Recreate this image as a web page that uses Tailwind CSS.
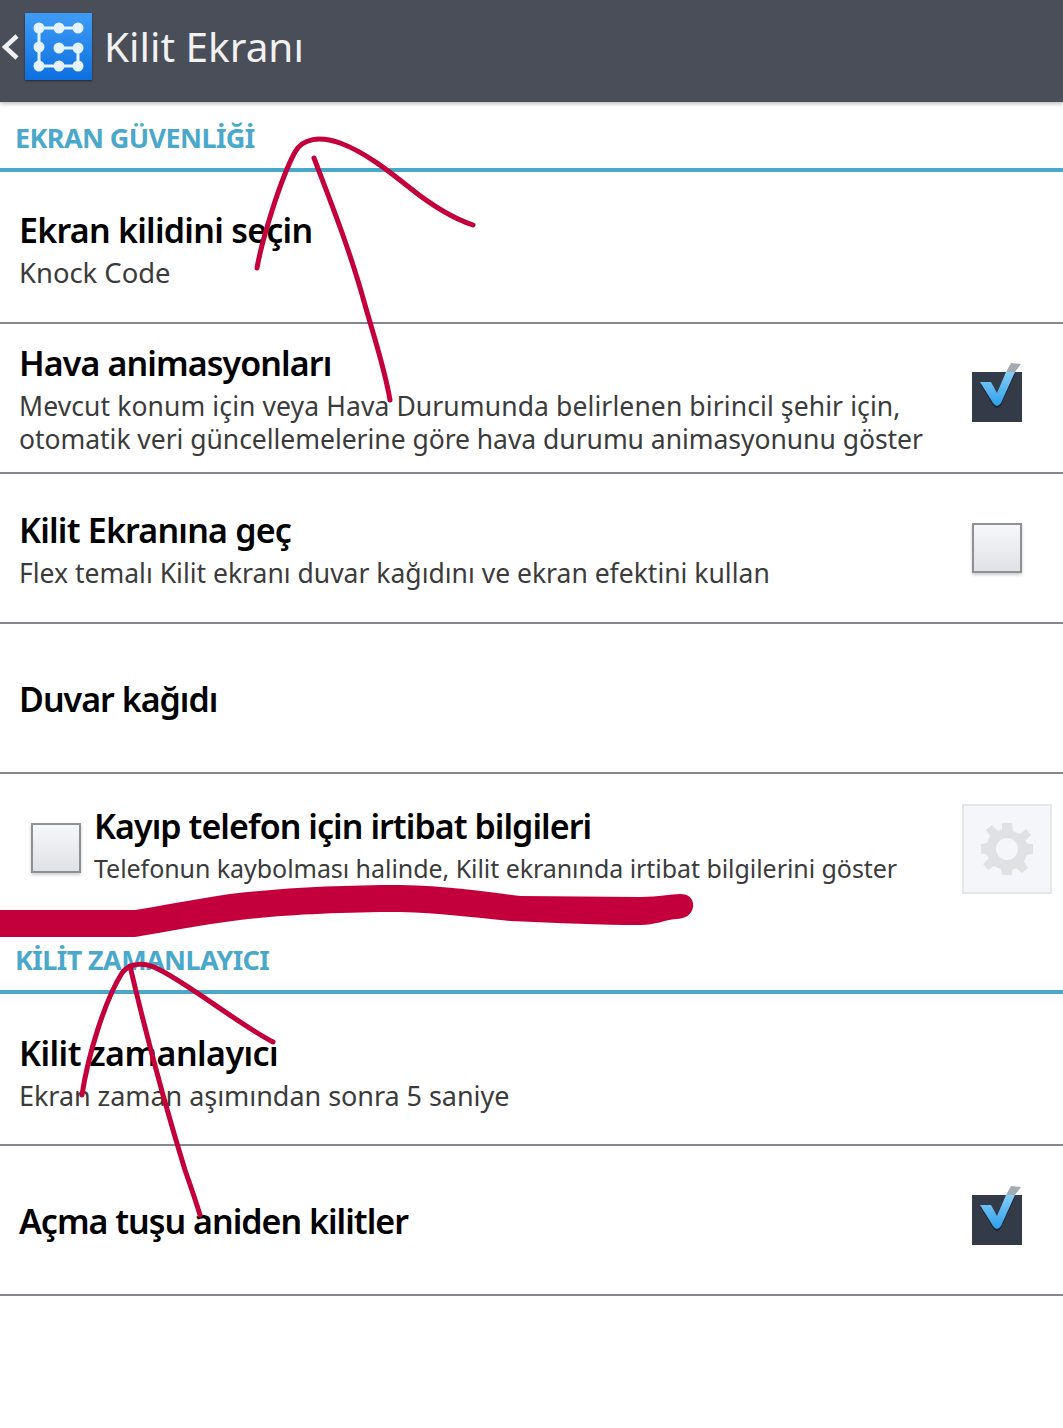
<!DOCTYPE html>
<html lang="tr">
<head>
    <meta charset="UTF-8">
    <title>Kilit Ekranı</title>
    <script src="https://cdn.jsdelivr.net/npm/@tailwindcss/browser@4"></script>
</head>
<body class="bg-white">
    <div class="relative w-[1063px] h-[1428px] overflow-hidden bg-white font-['Noto_Sans','Open_Sans',sans-serif]">

        <!-- Action bar -->
        <header class="flex items-center h-[102px] bg-[#4a4e59] shadow-[0_2px_4px_rgba(0,0,0,0.25)]">
            <svg class="ml-[2px] w-[17px] h-[26px] mt-[-8px]" viewBox="0 0 17 26" fill="none">
                <path d="M15 2 L3 13 L15 24" stroke="#f0f0f0" stroke-width="4.5" stroke-linejoin="miter"/>
            </svg>
            <svg class="ml-[6px] mt-[-9px] w-[67px] h-[67px] shadow-[0_1px_2px_rgba(0,0,0,0.5)]" viewBox="0 0 67 67">
                <defs>
                    <linearGradient id="appIcon" x1="0" y1="0" x2="0" y2="1">
                        <stop offset="0" stop-color="#3f9cf5"/>
                        <stop offset="1" stop-color="#0d6fe0"/>
                    </linearGradient>
                    <linearGradient id="tick" x1="0" y1="0" x2="0" y2="1">
                        <stop offset="0" stop-color="#86cdf6"/>
                        <stop offset="1" stop-color="#2f9fea"/>
                    </linearGradient>
                </defs>
                <rect width="67" height="67" fill="url(#appIcon)"/>
                <path d="M53 15 H14 V53 H53 V35 H33" fill="none" stroke="#e4f3ff" stroke-width="3"/>
                <g fill="#e4f3ff">
                    <circle cx="14" cy="15" r="5.5"/><circle cx="34" cy="15" r="5.5"/><circle cx="53" cy="15" r="5.5"/>
                    <circle cx="14" cy="34" r="5.5"/><circle cx="34" cy="35" r="5.5"/><circle cx="53" cy="35" r="5.5"/>
                    <circle cx="14" cy="53" r="5.5"/><circle cx="34" cy="53" r="5.5"/><circle cx="53" cy="53" r="5.5"/>
                </g>
            </svg>
            <h1 class="ml-[12px] mt-[-8px] text-[40.5px] leading-none text-[#f1f1f1]">Kilit Ekranı</h1>
        </header>

        <!-- Ekran guvenligi -->
        <div class="flex items-end h-[70px] px-[15px] pb-[12px] border-b-4 border-[#4aa8cb]">
            <h2 class="text-[27px] leading-[36px] font-bold tracking-[-0.6px] text-[#4aa8cb]">EKRAN GÜVENLİĞİ</h2>
        </div>

        <div class="flex flex-col justify-center h-[152px] pt-[4px] pl-[19px] pr-[41px] border-b-2 border-[#85888e]">
            <p class="text-[34px] leading-[42px] font-semibold tracking-[-0.75px] text-black">Ekran kilidini seçin</p>
            <p class="mt-[5px] text-[27.4px] leading-[33px] text-[#3b3b3b]">Knock Code</p>
        </div>

        <div class="flex items-center justify-between h-[150px] pl-[19px] pr-[41px] border-b-2 border-[#85888e]">
            <div class="pt-[2px]">
                <p class="text-[34px] leading-[42px] font-semibold tracking-[-0.9px] text-black">Hava animasyonları</p>
                <p class="mt-[6px] text-[26.5px] leading-[33px] text-[#3b3b3b]"><span class="tracking-[0.1px]">Mevcut konum için veya Hava Durumunda belirlenen birincil şehir için,</span><br><span class="tracking-[-0.04px]">otomatik veri güncellemelerine göre hava durumu animasyonunu göster</span></p>
            </div>
            <svg class="shrink-0 w-[50px] h-[60px] mt-[-12px]" viewBox="0 0 50 60">
                <rect y="10" width="50" height="50" fill="#333a48"/>
                <path d="M34 10 L39 1 L49 2 L43 10 Z" fill="#a3abb3"/>
                <path d="M8 22 L19 22 L25 33 L34 12 L43 12 L29 43 Q25 49 21 43 Z" fill="#1d2330"/>
                <path d="M8 20 L19 20 L25 31 L34 10 L43 10 L29 41 Q25 47 21 41 Z" fill="url(#tick)"/>
            </svg>
        </div>

        <div class="flex items-center justify-between h-[150px] pl-[19px] pr-[41px] border-b-2 border-[#85888e]">
            <div class="pt-[3px]">
                <p class="text-[34px] leading-[42px] font-semibold tracking-[-0.8px] text-black">Kilit Ekranına geç</p>
                <p class="mt-[6px] text-[26.5px] leading-[33px] text-[#3b3b3b]">Flex temalı Kilit ekranı duvar kağıdını ve ekran efektini kullan</p>
            </div>
            <div class="w-[50px] h-[50px] border-2 border-[#8f9094] bg-gradient-to-b from-[#f6f7f9] to-[#dfe2e6] shadow-[0_2px_3px_rgba(0,0,0,0.2)]"></div>
        </div>

        <div class="flex items-center h-[150px] pt-[2px] pl-[19px] border-b-2 border-[#85888e]">
            <p class="text-[34px] leading-[42px] font-semibold tracking-[-1px] text-black">Duvar kağıdı</p>
        </div>

        <!-- Kayip telefon -->
        <div class="flex items-start h-[149px] pt-[31px] pl-[31px] pr-[11px]">
            <div class="shrink-0 mt-[18px] w-[50px] h-[50px] border-2 border-[#8f9094] bg-gradient-to-b from-[#f6f7f9] to-[#dfe2e6] shadow-[0_2px_3px_rgba(0,0,0,0.2)]"></div>
            <div class="ml-[13px] flex-1">
                <p class="text-[34px] leading-[42px] font-semibold tracking-[-0.95px] text-black">Kayıp telefon için irtibat bilgileri</p>
                <p class="mt-[5px] text-[25px] leading-[33px] tracking-[-0.055px] text-[#3b3b3b]">Telefonun kaybolması halinde, Kilit ekranında irtibat bilgilerini göster</p>
            </div>
            <div class="shrink-0 mt-[-1px] flex items-center justify-center w-[90px] h-[90px] border-2 border-[#e6e7ea] bg-[#f5f6f9]">
                <svg class="w-[52px] h-[52px]" viewBox="0 0 52 52">
                    <path fill="#dfe1e3" fill-rule="evenodd" d="M21 0 H31 L32 8 L39 11 L45 6 L50 12 L44 18 L47 21 L52 21 V31 L46 32 L43 39 L47 45 L41 50 L35 45 L31 47 L31 52 H21 L20 46 L13 43 L7 47 L2 41 L8 35 L5 31 L0 31 V21 L6 20 L9 13 L5 7 L11 2 L17 8 L21 6 Z M26 15 A11 11 0 1 0 26 37 A11 11 0 1 0 26 15 Z"/>
                </svg>
            </div>
        </div>

        <!-- Kilit zamanlayici -->
        <div class="flex items-end h-[71px] px-[15px] pb-[12px] border-b-4 border-[#4aa8cb]">
            <h2 class="text-[27px] leading-[36px] font-bold tracking-[-0.6px] text-[#4aa8cb]">KİLİT ZAMANLAYICI</h2>
        </div>

        <div class="flex flex-col justify-center h-[152px] pt-[5px] pl-[19px] pr-[41px] border-b-2 border-[#85888e]">
            <p class="text-[34px] leading-[42px] font-semibold tracking-[-0.55px] text-black">Kilit zamanlayıcı</p>
            <p class="mt-[5px] text-[27px] leading-[33px] tracking-[-0.05px] text-[#3b3b3b]">Ekran zaman aşımından sonra 5 saniye</p>
        </div>

        <div class="flex items-center justify-between h-[150px] pl-[19px] pr-[41px] border-b-2 border-[#85888e]">
            <p class="pt-[2px] text-[34px] leading-[42px] font-semibold tracking-[-1px] text-black">Açma tuşu aniden kilitler</p>
            <svg class="shrink-0 w-[50px] h-[60px] mt-[-10px]" viewBox="0 0 50 60">
                <rect y="10" width="50" height="50" fill="#333a48"/>
                <path d="M34 10 L39 1 L49 2 L43 10 Z" fill="#a3abb3"/>
                <path d="M8 22 L19 22 L25 33 L34 12 L43 12 L29 43 Q25 49 21 43 Z" fill="#1d2330"/>
                <path d="M8 20 L19 20 L25 31 L34 10 L43 10 L29 41 Q25 47 21 41 Z" fill="url(#tick)"/>
            </svg>
        </div>

        <!-- Hand drawn marks on top of the screenshot -->
        <svg class="absolute left-0 top-0 pointer-events-none" width="1063" height="1428" viewBox="0 0 1063 1428" fill="none" stroke="#c4003c" stroke-linecap="round" stroke-linejoin="round">
            <path stroke-width="5" d="M257 268 C262 240 280 180 295 152 C303 138 320 136 340 143 C365 152 390 172 410 188 C430 204 452 218 473 225"/>
            <path stroke-width="5" d="M314 158 C330 200 350 250 365 305 C375 340 385 370 390 400"/>
            <path stroke-width="5" d="M82 1095 C88 1055 105 1000 122 973 C130 962 145 962 160 970 C190 985 240 1025 273 1042"/>
            <path stroke-width="5" d="M130 966 C145 1030 165 1105 185 1170 C192 1190 197 1205 200 1215"/>
            <path fill="#c4003c" stroke="none" d="M0 910 H135 C160 906 190 900 230 894 C280 888 340 885 400 885 C450 886 490 892 520 896 L640 897 C660 897 670 894 680 894 C690 894 694 900 693 907 C692 914 686 919 676 919 C665 920 655 925 640 925 C600 925 560 923 510 921 C470 917 440 913 400 912 C340 912 280 915 240 920 C200 925 165 932 135 937 H0 Z"/>
        </svg>
    </div>
</body>
</html>
